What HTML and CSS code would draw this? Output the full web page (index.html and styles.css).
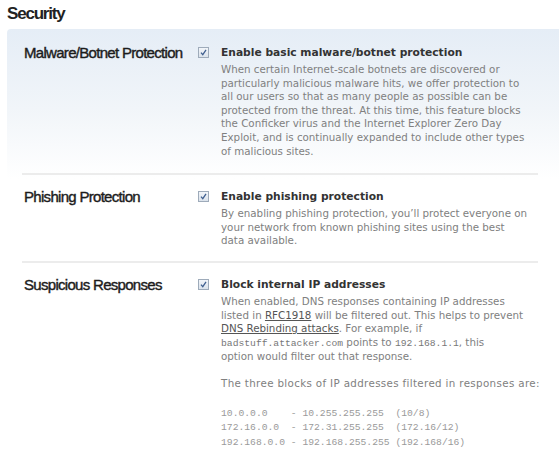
FILE: index.html
```html
<!DOCTYPE html>
<html>
<head>
<meta charset="utf-8">
<link rel="stylesheet" href="styles.css">
</head>
<body>
<h1 class="title">Security</h1>
<div class="panel">
  <div class="row first">
    <div class="label">Malware/Botnet Protection</div>
    <div class="check"><span class="box"><svg viewBox="0 0 10 10" width="9" height="9"><path d="M2.2 5.2 L4.2 7.4 L7.8 2.2" fill="none" stroke="#3f5f8f" stroke-width="1.4"/></svg></span></div>
    <div class="content">
      <div class="heading">Enable basic malware/botnet protection</div>
      <p class="text">When certain Internet-scale botnets are discovered or<br>particularly malicious malware hits, we offer protection to<br>all our users so that as many people as possible can be<br>protected from the threat. At this time, this feature blocks<br>the Conficker virus and the Internet Explorer Zero Day<br>Exploit, and is continually expanded to include other types<br>of malicious sites.</p>
    </div>
  </div>
  <div class="row">
    <div class="label">Phishing Protection</div>
    <div class="check"><span class="box"><svg viewBox="0 0 10 10" width="9" height="9"><path d="M2.2 5.2 L4.2 7.4 L7.8 2.2" fill="none" stroke="#3f5f8f" stroke-width="1.4"/></svg></span></div>
    <div class="content">
      <div class="heading">Enable phishing protection</div>
      <p class="text">By enabling phishing protection, you’ll protect everyone on<br>your network from known phishing sites using the best<br>data available.</p>
    </div>
  </div>
  <div class="row last">
    <div class="label">Suspicious Responses</div>
    <div class="check"><span class="box"><svg viewBox="0 0 10 10" width="9" height="9"><path d="M2.2 5.2 L4.2 7.4 L7.8 2.2" fill="none" stroke="#3f5f8f" stroke-width="1.4"/></svg></span></div>
    <div class="content">
      <div class="heading">Block internal IP addresses</div>
      <p class="text">When enabled, DNS responses containing IP addresses<br>listed in <a class="link" href="#">RFC1918</a> will be filtered out. This helps to prevent<br><a class="link" href="#">DNS Rebinding attacks</a>. For example, if<br><code class="code">badstuff.attacker.com</code> points to <code class="code">192.168.1.1</code>, this<br>option would filter out that response.</p>
      <p class="text wide">The three blocks of IP addresses filtered in responses are:</p>
      <pre class="ranges">10.0.0.0    - 10.255.255.255  (10/8)
172.16.0.0  - 172.31.255.255  (172.16/12)
192.168.0.0 - 192.168.255.255 (192.168/16)</pre>
    </div>
  </div>
</div>
</body>
</html>
```

FILE: styles.css
```css
html, body {
  margin: 0;
  padding: 0;
  background: #ffffff;
}
body {
  width: 559px;
  height: 460px;
  overflow: hidden;
}
.title {
  margin: 0;
  padding: 4px 0 0 7px;
  height: 25px;
  box-sizing: border-box;
  font-family: "Liberation Sans", Arial, sans-serif;
  font-size: 17px;
  line-height: 20px;
  font-weight: bold;
  letter-spacing: -1.2px;
  color: #222;
}
.panel {
  margin-left: 7px;
  margin-top: 4px;
  padding: 0 21px 0 15px;
  border-top-left-radius: 4px;
  background: linear-gradient(180deg, #e5edf6 0px, #f1f5f9 80px, #ffffff 150px);
}
.row {
  display: grid;
  grid-template-columns: 176px 23px 1fr;
  padding: 14px 0 13px 0;
  border-bottom: 2px solid #ececec;
}
.row.first {
  padding-top: 16px;
  padding-bottom: 15px;
}
.row.last {
  border-bottom: none;
  padding-top: 14px;
}
.label {
  padding-left: 2px;
  font-family: "Liberation Sans", Arial, sans-serif;
  font-size: 15px;
  line-height: 16px;
  letter-spacing: -0.7px;
  color: #1c1c1c;
  -webkit-text-stroke: 0.4px #1c1c1c;
}
.check {
  padding-top: 2px;
}
.box {
  display: flex;
  align-items: center;
  justify-content: center;
  width: 11px;
  height: 11px;
  box-sizing: border-box;
  border: 1px solid #9eabba;
  background: linear-gradient(180deg, #f2f5f9, #dbe3ec);
}
.content {
  min-width: 0;
  font-family: "DejaVu Sans", Verdana, sans-serif;
}
.heading {
  font-size: 10.7px;
  line-height: 16px;
  font-weight: bold;
  color: #333;
  margin-bottom: 2px;
}
.text {
  margin: 0 0 13px 0;
  font-size: 10.3px;
  line-height: 13.6px;
  color: #808080;
  white-space: nowrap;
}
.text.wide {
  letter-spacing: 0.35px;
}
.text:last-child {
  margin-bottom: 0;
}
.link {
  color: #555;
  text-decoration: underline;
}
.code {
  font-family: "Liberation Mono", "Courier New", monospace;
  font-size: 9.7px;
  color: #777;
}
.ranges {
  margin: 16px 0 0 0;
  font-family: "Liberation Mono", "Courier New", monospace;
  font-size: 9.7px;
  line-height: 14.6px;
  color: #9a9a9a;
}
```
